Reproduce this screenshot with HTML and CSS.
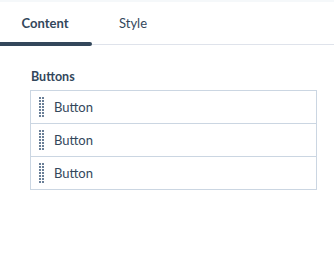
FILE: index.html
```html
<!DOCTYPE html>
<html>
<head>
<meta charset="utf-8">
<link rel="stylesheet" href="styles.css">
</head>
<body>
<div class="topstrip"></div>
<div class="tabs">
  <div class="tab active">Content</div>
  <div class="tab">Style</div>
</div>
<div class="panel">
  <div class="label">Buttons</div>
  <div class="list">
    <div class="row"><span class="handle"></span><span class="text">Button</span></div>
    <div class="row"><span class="handle"></span><span class="text">Button</span></div>
    <div class="row"><span class="handle"></span><span class="text">Button</span></div>
  </div>
</div>
</body>
</html>
```
FILE: styles.css
```css
html, body {
  margin: 0;
  padding: 0;
  background: #fff;
  font-family: "Lato", "Liberation Sans", sans-serif;
  color: #33475b;
}
.topstrip {
  height: 2px;
  background: #f5f8fa;
}
.tabs {
  display: flex;
  height: 42px;
  border-bottom: 1px solid #dfe3eb;
  position: relative;
}
.tab {
  display: flex;
  align-items: center;
  justify-content: center;
  font-size: 13px;
  color: #33475b;
  position: relative;
}
.tab:first-child {
  width: 90px;
  font-weight: 700;
}
.tab:nth-child(2) {
  padding-left: 29px;
}
.tab.active::after {
  content: "";
  position: absolute;
  left: 0;
  right: -2px;
  bottom: -2px;
  height: 4px;
  background: #33475b;
  border-radius: 0 2px 2px 0;
}
.panel {
  padding: 24px 18px 0 30px;
}
.label {
  font-size: 12.5px;
  font-weight: 700;
  margin-left: 1px;
  margin-bottom: 5px;
  line-height: 16px;
}
.list {
  border: 1px solid #cbd6e2;
  width: 285px;
}
.row {
  height: 32px;
  display: flex;
  align-items: center;
  border-top: 1px solid #cbd6e2;
}
.row:first-child {
  border-top: none;
}
.handle {
  width: 5px;
  height: 20px;
  margin-left: 8px;
  margin-right: 10px;
  background-image:
    linear-gradient(90deg, transparent 2px, #fff 2px),
    linear-gradient(180deg, #6a7f97 2px, transparent 2px);
  background-size: 3px 3px;
}
.text {
  font-size: 13px;
  color: #33475b;
}
```
